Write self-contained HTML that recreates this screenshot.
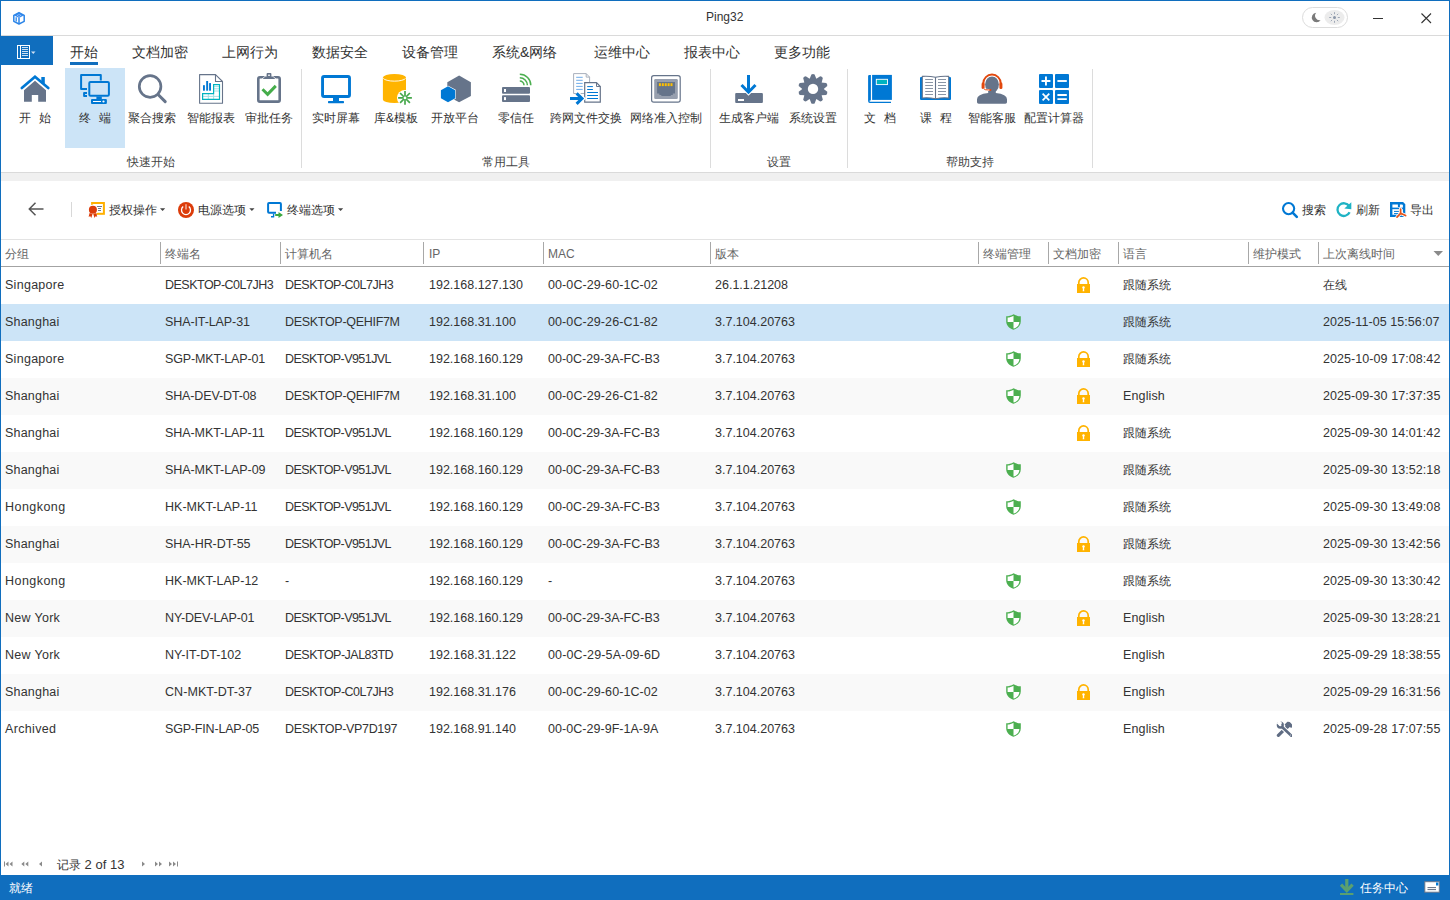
<!DOCTYPE html>
<html><head><meta charset="utf-8">
<style>
*{margin:0;padding:0;box-sizing:border-box}
html,body{width:1450px;height:900px;overflow:hidden;background:#fff}
body{position:relative;font-family:"Liberation Sans",sans-serif;color:#333;font-size:12px}
.a{position:absolute;white-space:nowrap}
.bl{background:#106ebe}
.sep{position:absolute;background:#dcdcdc;width:1px}
.tab{position:absolute;top:43px;font-size:14px;line-height:18px;color:#333}
.rb{position:absolute;top:108px;font-size:12px;line-height:20px;color:#333;text-align:center;width:80px}
.gl{position:absolute;top:152px;font-size:12px;line-height:20px;color:#444;text-align:center;width:100px}
.ic{position:absolute}
.tb{position:absolute;top:200px;font-size:12px;line-height:20px;color:#333}
.hd{position:absolute;top:244px;font-size:12px;line-height:20px;color:#666}
.hs{position:absolute;top:242px;height:22px;width:1px;background:#a8a8a8}
.row{position:absolute;left:1px;width:1448px;height:37px}
.row div{position:absolute;top:8px;line-height:20px;font-size:12.5px;color:#333;white-space:nowrap}
.row svg{position:absolute;top:10px}
.alt{background:#f9f9f9}
.selr{background:#cce4f7}
</style></head><body>
<!-- window border -->
<div class="a bl" style="left:0;top:0;width:1450px;height:1px"></div>
<div class="a bl" style="left:0;top:0;width:1px;height:900px"></div>
<div class="a bl" style="left:1449px;top:0;width:1px;height:900px"></div>

<!-- title bar -->
<div class="a" style="left:706px;top:9px;font-size:12px;line-height:16px;color:#333">Ping32</div>
<div class="a" style="left:1px;top:35px;width:1448px;height:1px;background:#dadada"></div>

<!-- tab bar -->
<div class="a bl" style="left:1px;top:36px;width:52px;height:29px"></div>
<div class="tab" style="left:70px">开始</div>
<div class="a bl" style="left:70px;top:62px;width:28px;height:3px"></div>
<div class="tab" style="left:132px">文档加密</div>
<div class="tab" style="left:222px">上网行为</div>
<div class="tab" style="left:312px">数据安全</div>
<div class="tab" style="left:402px">设备管理</div>
<div class="tab" style="left:492px">系统&amp;网络</div>
<div class="tab" style="left:594px">运维中心</div>
<div class="tab" style="left:684px">报表中心</div>
<div class="tab" style="left:774px">更多功能</div>

<!-- ribbon -->
<div class="a" style="left:65px;top:68px;width:60px;height:80px;background:#cce4f7"></div>
<div class="rb" style="left:-5px">开<span style="display:inline-block;width:8px"></span>始</div>
<div class="rb" style="left:55px">终<span style="display:inline-block;width:8px"></span>端</div>
<div class="rb" style="left:112px">聚合搜索</div>
<div class="rb" style="left:171px">智能报表</div>
<div class="rb" style="left:229px">审批任务</div>
<div class="rb" style="left:296px">实时屏幕</div>
<div class="rb" style="left:356px">库&amp;模板</div>
<div class="rb" style="left:415px">开放平台</div>
<div class="rb" style="left:476px">零信任</div>
<div class="rb" style="left:546px">跨网文件交换</div>
<div class="rb" style="left:626px">网络准入控制</div>
<div class="rb" style="left:709px">生成客户端</div>
<div class="rb" style="left:773px">系统设置</div>
<div class="rb" style="left:840px">文<span style="display:inline-block;width:8px"></span>档</div>
<div class="rb" style="left:896px">课<span style="display:inline-block;width:8px"></span>程</div>
<div class="rb" style="left:952px">智能客服</div>
<div class="rb" style="left:1014px">配置计算器</div>
<div class="sep" style="left:301px;top:69px;height:99px"></div>
<div class="sep" style="left:710px;top:69px;height:99px"></div>
<div class="sep" style="left:847px;top:69px;height:99px"></div>
<div class="sep" style="left:1092px;top:69px;height:99px"></div>
<div class="gl" style="left:101px">快速开始</div>
<div class="gl" style="left:456px">常用工具</div>
<div class="gl" style="left:729px">设置</div>
<div class="gl" style="left:920px">帮助支持</div>
<div class="a" style="left:1px;top:172px;width:1448px;height:1px;background:#dadada"></div>
<div class="a" style="left:1px;top:173px;width:1448px;height:8px;background:#f0f0f0"></div>

<!-- toolbar -->
<div class="a" style="left:71px;top:202px;width:1px;height:15px;background:#d8d8d8"></div>
<div class="tb" style="left:109px">授权操作</div>
<div class="tb" style="left:198px">电源选项</div>
<div class="tb" style="left:287px">终端选项</div>
<div class="tb" style="left:1302px">搜索</div>
<div class="tb" style="left:1356px">刷新</div>
<div class="tb" style="left:1410px">导出</div>

<!-- header -->
<div class="a" style="left:1px;top:239px;width:1448px;height:1px;background:#e3e3e3"></div>
<div class="a" style="left:1px;top:266px;width:1448px;height:1px;background:#a3a3a3"></div>
<div class="hd" style="left:5px">分组</div>
<div class="hs" style="left:160px"></div><div class="hd" style="left:165px">终端名</div>
<div class="hs" style="left:280px"></div><div class="hd" style="left:285px">计算机名</div>
<div class="hs" style="left:423px"></div><div class="hd" style="left:429px">IP</div>
<div class="hs" style="left:543px"></div><div class="hd" style="left:548px">MAC</div>
<div class="hs" style="left:710px"></div><div class="hd" style="left:715px">版本</div>
<div class="hs" style="left:978px"></div><div class="hd" style="left:983px">终端管理</div>
<div class="hs" style="left:1048px"></div><div class="hd" style="left:1053px">文档加密</div>
<div class="hs" style="left:1118px"></div><div class="hd" style="left:1123px">语言</div>
<div class="hs" style="left:1248px"></div><div class="hd" style="left:1253px">维护模式</div>
<div class="hs" style="left:1318px"></div><div class="hd" style="left:1323px">上次离线时间</div>

<!-- ROWS -->
<div class="row" style="top:267px"><div style="left:4px;letter-spacing:0.28px">Singapore</div><div style="left:164px;letter-spacing:-0.51px">DESKTOP-C0L7JH3</div><div style="left:284px;letter-spacing:-0.51px">DESKTOP-C0L7JH3</div><div style="left:428px;letter-spacing:0.00px">192.168.127.130</div><div style="left:547px;letter-spacing:0.09px">00-0C-29-60-1C-02</div><div style="left:714px;letter-spacing:0.00px">26.1.1.21208</div><svg class="lck" width="13" height="16" style="left:1076px" viewBox="0 0 13 16"><use href="#lock"/></svg><div style="left:1122px;font-size:12px">跟随系统</div><div style="left:1322px;font-size:12px">在线</div></div>
<div class="row selr" style="top:304px"><div style="left:4px;letter-spacing:0.20px">Shanghai</div><div style="left:164px;letter-spacing:-0.10px">SHA-IT-LAP-31</div><div style="left:284px;letter-spacing:-0.30px">DESKTOP-QEHIF7M</div><div style="left:428px;letter-spacing:0.00px">192.168.31.100</div><div style="left:547px;letter-spacing:0.09px">00-0C-29-26-C1-82</div><div style="left:714px;letter-spacing:0.00px">3.7.104.20763</div><svg class="shd" width="15" height="16" style="left:1005px" viewBox="0 0 15 16"><use href="#shield"/></svg><div style="left:1122px;font-size:12px">跟随系统</div><div style="left:1322px;letter-spacing:0.07px">2025-11-05 15:56:07</div></div>
<div class="row" style="top:341px"><div style="left:4px;letter-spacing:0.28px">Singapore</div><div style="left:164px;letter-spacing:-0.15px">SGP-MKT-LAP-01</div><div style="left:284px;letter-spacing:-0.56px">DESKTOP-V951JVL</div><div style="left:428px;letter-spacing:0.00px">192.168.160.129</div><div style="left:547px;letter-spacing:-0.01px">00-0C-29-3A-FC-B3</div><div style="left:714px;letter-spacing:0.00px">3.7.104.20763</div><svg class="shd" width="15" height="16" style="left:1005px" viewBox="0 0 15 16"><use href="#shield"/></svg><svg class="lck" width="13" height="16" style="left:1076px" viewBox="0 0 13 16"><use href="#lock"/></svg><div style="left:1122px;font-size:12px">跟随系统</div><div style="left:1322px;letter-spacing:0.07px">2025-10-09 17:08:42</div></div>
<div class="row alt" style="top:378px"><div style="left:4px;letter-spacing:0.20px">Shanghai</div><div style="left:164px;letter-spacing:-0.13px">SHA-DEV-DT-08</div><div style="left:284px;letter-spacing:-0.30px">DESKTOP-QEHIF7M</div><div style="left:428px;letter-spacing:0.00px">192.168.31.100</div><div style="left:547px;letter-spacing:0.09px">00-0C-29-26-C1-82</div><div style="left:714px;letter-spacing:0.00px">3.7.104.20763</div><svg class="shd" width="15" height="16" style="left:1005px" viewBox="0 0 15 16"><use href="#shield"/></svg><svg class="lck" width="13" height="16" style="left:1076px" viewBox="0 0 13 16"><use href="#lock"/></svg><div style="left:1122px;letter-spacing:0.13px">English</div><div style="left:1322px;letter-spacing:0.07px">2025-09-30 17:37:35</div></div>
<div class="row" style="top:415px"><div style="left:4px;letter-spacing:0.20px">Shanghai</div><div style="left:164px;letter-spacing:-0.07px">SHA-MKT-LAP-11</div><div style="left:284px;letter-spacing:-0.56px">DESKTOP-V951JVL</div><div style="left:428px;letter-spacing:0.00px">192.168.160.129</div><div style="left:547px;letter-spacing:-0.01px">00-0C-29-3A-FC-B3</div><div style="left:714px;letter-spacing:0.00px">3.7.104.20763</div><svg class="lck" width="13" height="16" style="left:1076px" viewBox="0 0 13 16"><use href="#lock"/></svg><div style="left:1122px;font-size:12px">跟随系统</div><div style="left:1322px;letter-spacing:0.07px">2025-09-30 14:01:42</div></div>
<div class="row alt" style="top:452px"><div style="left:4px;letter-spacing:0.20px">Shanghai</div><div style="left:164px;letter-spacing:-0.07px">SHA-MKT-LAP-09</div><div style="left:284px;letter-spacing:-0.56px">DESKTOP-V951JVL</div><div style="left:428px;letter-spacing:0.00px">192.168.160.129</div><div style="left:547px;letter-spacing:-0.01px">00-0C-29-3A-FC-B3</div><div style="left:714px;letter-spacing:0.00px">3.7.104.20763</div><svg class="shd" width="15" height="16" style="left:1005px" viewBox="0 0 15 16"><use href="#shield"/></svg><div style="left:1122px;font-size:12px">跟随系统</div><div style="left:1322px;letter-spacing:0.07px">2025-09-30 13:52:18</div></div>
<div class="row" style="top:489px"><div style="left:4px;letter-spacing:0.46px">Hongkong</div><div style="left:164px;letter-spacing:0.02px">HK-MKT-LAP-11</div><div style="left:284px;letter-spacing:-0.56px">DESKTOP-V951JVL</div><div style="left:428px;letter-spacing:0.00px">192.168.160.129</div><div style="left:547px;letter-spacing:-0.01px">00-0C-29-3A-FC-B3</div><div style="left:714px;letter-spacing:0.00px">3.7.104.20763</div><svg class="shd" width="15" height="16" style="left:1005px" viewBox="0 0 15 16"><use href="#shield"/></svg><div style="left:1122px;font-size:12px">跟随系统</div><div style="left:1322px;letter-spacing:0.07px">2025-09-30 13:49:08</div></div>
<div class="row alt" style="top:526px"><div style="left:4px;letter-spacing:0.20px">Shanghai</div><div style="left:164px;letter-spacing:-0.05px">SHA-HR-DT-55</div><div style="left:284px;letter-spacing:-0.56px">DESKTOP-V951JVL</div><div style="left:428px;letter-spacing:0.00px">192.168.160.129</div><div style="left:547px;letter-spacing:-0.01px">00-0C-29-3A-FC-B3</div><div style="left:714px;letter-spacing:0.00px">3.7.104.20763</div><svg class="lck" width="13" height="16" style="left:1076px" viewBox="0 0 13 16"><use href="#lock"/></svg><div style="left:1122px;font-size:12px">跟随系统</div><div style="left:1322px;letter-spacing:0.07px">2025-09-30 13:42:56</div></div>
<div class="row" style="top:563px"><div style="left:4px;letter-spacing:0.46px">Hongkong</div><div style="left:164px;letter-spacing:0.02px">HK-MKT-LAP-12</div><div style="left:284px">-</div><div style="left:428px;letter-spacing:0.00px">192.168.160.129</div><div style="left:547px">-</div><div style="left:714px;letter-spacing:0.00px">3.7.104.20763</div><svg class="shd" width="15" height="16" style="left:1005px" viewBox="0 0 15 16"><use href="#shield"/></svg><div style="left:1122px;font-size:12px">跟随系统</div><div style="left:1322px;letter-spacing:0.07px">2025-09-30 13:30:42</div></div>
<div class="row alt" style="top:600px"><div style="left:4px;letter-spacing:0.29px">New York</div><div style="left:164px;letter-spacing:-0.15px">NY-DEV-LAP-01</div><div style="left:284px;letter-spacing:-0.56px">DESKTOP-V951JVL</div><div style="left:428px;letter-spacing:0.00px">192.168.160.129</div><div style="left:547px;letter-spacing:-0.01px">00-0C-29-3A-FC-B3</div><div style="left:714px;letter-spacing:0.00px">3.7.104.20763</div><svg class="shd" width="15" height="16" style="left:1005px" viewBox="0 0 15 16"><use href="#shield"/></svg><svg class="lck" width="13" height="16" style="left:1076px" viewBox="0 0 13 16"><use href="#lock"/></svg><div style="left:1122px;letter-spacing:0.13px">English</div><div style="left:1322px;letter-spacing:0.07px">2025-09-30 13:28:21</div></div>
<div class="row" style="top:637px"><div style="left:4px;letter-spacing:0.29px">New York</div><div style="left:164px;letter-spacing:0.03px">NY-IT-DT-102</div><div style="left:284px;letter-spacing:-0.51px">DESKTOP-JAL83TD</div><div style="left:428px;letter-spacing:0.00px">192.168.31.122</div><div style="left:547px;letter-spacing:0.14px">00-0C-29-5A-09-6D</div><div style="left:714px;letter-spacing:0.00px">3.7.104.20763</div><div style="left:1122px;letter-spacing:0.13px">English</div><div style="left:1322px;letter-spacing:0.07px">2025-09-29 18:38:55</div></div>
<div class="row alt" style="top:674px"><div style="left:4px;letter-spacing:0.20px">Shanghai</div><div style="left:164px;letter-spacing:0.08px">CN-MKT-DT-37</div><div style="left:284px;letter-spacing:-0.51px">DESKTOP-C0L7JH3</div><div style="left:428px;letter-spacing:0.00px">192.168.31.176</div><div style="left:547px;letter-spacing:0.09px">00-0C-29-60-1C-02</div><div style="left:714px;letter-spacing:0.00px">3.7.104.20763</div><svg class="shd" width="15" height="16" style="left:1005px" viewBox="0 0 15 16"><use href="#shield"/></svg><svg class="lck" width="13" height="16" style="left:1076px" viewBox="0 0 13 16"><use href="#lock"/></svg><div style="left:1122px;letter-spacing:0.13px">English</div><div style="left:1322px;letter-spacing:0.07px">2025-09-29 16:31:56</div></div>
<div class="row" style="top:711px"><div style="left:4px;letter-spacing:0.34px">Archived</div><div style="left:164px;letter-spacing:-0.18px">SGP-FIN-LAP-05</div><div style="left:284px;letter-spacing:-0.33px">DESKTOP-VP7D197</div><div style="left:428px;letter-spacing:0.00px">192.168.91.140</div><div style="left:547px;letter-spacing:0.04px">00-0C-29-9F-1A-9A</div><div style="left:714px;letter-spacing:0.00px">3.7.104.20763</div><svg class="shd" width="15" height="16" style="left:1005px" viewBox="0 0 15 16"><use href="#shield"/></svg><div style="left:1122px;letter-spacing:0.13px">English</div><svg class="tls" width="16" height="16" style="left:1275px" viewBox="0 0 16 16"><use href="#tools"/></svg><div style="left:1322px;letter-spacing:0.07px">2025-09-28 17:07:55</div></div>
<!-- /ROWS -->

<!-- pager -->
<div class="a" style="left:57px;top:856px;font-size:13px;line-height:18px;color:#333"><span style="font-size:12px">记录</span> 2 of 13</div>

<!-- status bar -->
<div class="a bl" style="left:0;top:875px;width:1450px;height:25px"></div>
<div class="a" style="left:9px;top:879px;font-size:12px;line-height:18px;color:#fff">就绪</div>
<div class="a" style="left:1360px;top:879px;font-size:12px;line-height:18px;color:#fff">任务中心</div>
<!-- ICONS -->
<svg class="a" style="left:0;top:0" width="1450" height="900" viewBox="0 0 1450 900">
<defs>
<g id="shield">
 <path d="M7.5,0.2 C5.3,1.6 2.6,2.3 0.2,2.3 V7.2 C0.2,11.6 3.6,14.5 7.5,15.8 C11.4,14.5 14.8,11.6 14.8,7.2 V2.3 C12.4,2.3 9.7,1.6 7.5,0.2 Z" fill="#4caf50"/>
 <path d="M7.5,1.8 C5.7,2.9 3.6,3.5 1.6,3.6 V8 H7.5 Z" fill="#fff"/>
 <path d="M7.5,8 H13.4 C13.2,11.3 10.8,13.5 7.5,14.6 Z" fill="#fff"/>
</g>
<g id="lock">
 <path d="M1.8,7.5 V5.6 A4.7,4.7 0 0 1 11.2,5.6 V7.5" fill="none" stroke="#ffb300" stroke-width="1.7"/>
 <rect x="0" y="7" width="13" height="9" fill="#ffb300"/>
 <circle cx="6.5" cy="10.5" r="1.2" fill="#fff"/>
 <path d="M6,10.5 H7 L7.3,14.3 H5.7 Z" fill="#fff"/>
</g>
<g id="tools">
 <path d="M2.4,14.4 L11.5,5.3" stroke="#5f6c83" stroke-width="3.2" stroke-linecap="round"/>
 <path d="M8.6,3.4 L11.4,0.7 Q13.6,0.4 14.8,2 L17,4.8 L15.3,6.9 L13.8,5.9 L11.6,8.1 Z" fill="#5f6c83"/>
 <g stroke="#fff" stroke-width="1.6" fill="#fff">
  <path d="M5,5 L15.2,14.6" stroke-width="4.6" stroke-linecap="round"/>
 </g>
 <circle cx="4.3" cy="4.1" r="3.6" fill="#5f6c83"/>
 <path d="M5,5 L15.2,14.6" stroke="#5f6c83" stroke-width="2.8" stroke-linecap="round"/>
 <path d="M1.2,0 L4.4,3.9 L6.2,2.1 L3.2,-1" fill="#fff"/>
 <circle cx="4.3" cy="4.1" r="1.2" fill="#fff"/>
 <path d="M4.3,4.1 L1.5,1.3" stroke="#fff" stroke-width="2.4"/>
 <circle cx="14.6" cy="14" r="0.55" fill="#dfe3ea"/>
</g>
</defs>

<!-- title bar app icon -->
<path d="M19,12.6 L24.2,15.3 L19,18 L13.8,15.3 Z" fill="#3b8cf0"/>
<g fill="#bcd8fb"><circle cx="17.6" cy="15.3" r="0.55"/><circle cx="20.4" cy="15.3" r="0.55"/><circle cx="19" cy="14.2" r="0.5"/><circle cx="19" cy="16.4" r="0.5"/></g>
<g fill="none" stroke="#2d86e8" stroke-width="1.5" stroke-linejoin="round">
 <path d="M19,12.6 L24.2,15.3 V21.3 L19,24 L13.8,21.3 V15.3 Z"/>
 <path d="M19,18 V24"/>
 <path d="M16.2,17.2 V21.6" stroke-width="1.3"/>
</g>
<!-- theme toggle -->
<rect x="1302.5" y="7.5" width="45" height="20" rx="10" fill="#fff" stroke="#dcdcdc" stroke-width="1"/>
<ellipse cx="1334.5" cy="17.5" rx="10" ry="7.5" fill="#ececec"/>
<path d="M1316.2,12.7 A4.8,4.8 0 1 0 1320.6,20.2 A4.6,4.6 0 0 1 1316.2,12.7 Z" fill="#7a7a7a"/>
<g stroke="#8a96a8" stroke-width="0.8">
 <path d="M1334.5,12.2 V14.2 M1334.5,20.8 V22.8 M1329.2,17.5 H1331.2 M1337.8,17.5 H1339.8 M1330.8,13.8 L1332.1,15.1 M1336.9,19.9 L1338.2,21.2 M1338.2,13.8 L1336.9,15.1 M1332.1,19.9 L1330.8,21.2"/>
</g>
<circle cx="1334.5" cy="17.5" r="1.5" fill="#8a96a8"/>
<!-- min / close -->
<rect x="1373" y="18" width="10" height="1" fill="#333"/>
<path d="M1421.5,13.5 L1431,23 M1431,13.5 L1421.5,23" stroke="#333" stroke-width="1.1"/>

<!-- file button icon -->
<g fill="none" stroke="#fff">
 <rect x="17.5" y="45.5" width="12" height="13" stroke-width="1"/>
 <path d="M20.5,45.5 V58.5" stroke-width="1"/>
 <path d="M22,47.5 H28 M22,49.5 H28 M22,51.5 H28 M22,53.5 H28 M22,55.5 H28" stroke-width="0.8"/>
</g>
<path d="M31,51.5 L35.5,51.5 L33.25,54 Z" fill="#cfe0f3"/>

<!-- RIBBON ICONS -->
<!-- home -->
<path d="M21.8,88 L35,76.8 L48.3,88" fill="none" stroke="#0078d4" stroke-width="2.7" stroke-linecap="round" stroke-linejoin="miter"/>
<rect x="41.3" y="77" width="3.5" height="6.5" fill="#0078d4"/>
<path d="M35,80.8 L24,90.3 V101.8 H31.8 V94.9 H38.2 V101.8 H46 V90.3 Z" fill="#66748a"/>
<!-- terminal -->
<g fill="none" stroke="#0078d4" stroke-width="2" stroke-linejoin="round">
 <path d="M87,89 H81.1 V75 H100.8 V80.5"/>
 <path d="M87,93 H84.1 V95.9 H87" stroke-width="2"/>
 <rect x="89.3" y="81.9" width="19.6" height="13.8" rx="1.2"/>
</g>
<rect x="96.4" y="96.5" width="5.4" height="2.8" fill="#0078d4"/>
<rect x="91" y="99" width="15.9" height="4.9" rx="1" fill="#0078d4"/>
<rect x="93" y="101" width="8" height="1" fill="#fff"/>
<circle cx="103.5" cy="101.5" r="1.1" fill="#fff"/>
<!-- search -->
<circle cx="150.1" cy="86.5" r="10.8" fill="none" stroke="#66748a" stroke-width="2.7"/>
<path d="M158.3,94.7 L165.2,101.6" stroke="#66748a" stroke-width="3" stroke-linecap="round"/>
<!-- report -->
<path d="M199.6,74.6 H215.5 L222.5,81.5 V103.3 H199.6 Z" fill="#fff" stroke="#66748a" stroke-width="1.1" stroke-linejoin="round"/>
<path d="M215.5,74.6 V81.5 H222.5" fill="none" stroke="#66748a" stroke-width="1.1"/>
<rect x="203" y="85.2" width="1.9" height="5.5" fill="#0078d4"/>
<rect x="206.2" y="81" width="1.9" height="9.7" fill="#0078d4"/>
<rect x="209.1" y="83.1" width="1.9" height="7.6" fill="#0078d4"/>
<path d="M208.3,93.6 V99.3 M213.6,93.6 V99.3 M202.5,96.4 H219.5 M213.6,86.6 H219.5 M213.6,88.8 H219.5 M213.6,91 H219.5" stroke="#9edde3" stroke-width="0.9" fill="none"/>
<path d="M202.6,93.6 H213.6 V84.6 H219.5 V99.4 H202.6 Z" fill="none" stroke="#00b3c0" stroke-width="1.2"/>
<!-- clipboard -->
<rect x="258.3" y="77.3" width="21.4" height="24.3" rx="1.6" fill="#fff" stroke="#66748a" stroke-width="2.6"/>
<path d="M262.6,79 L265.3,76.6 H266.6 V74 Q266.6,73.1 267.5,73.1 H270.5 Q271.4,73.1 271.4,74 V76.6 H272.7 L275.4,79 Z" fill="#66748a" stroke="#fff" stroke-width="1.3" paint-order="stroke"/>
<rect x="268.1" y="74.6" width="1.8" height="1.3" fill="#fff"/>
<path d="M262.5,89.3 L267.6,94.3 L275.8,85.9" fill="none" stroke="#45ad4a" stroke-width="3"/>
<!-- monitor -->
<rect x="322.55" y="76.45" width="26.95" height="20" rx="1.5" fill="none" stroke="#0078d4" stroke-width="2.9"/>
<rect x="333" y="97.5" width="6" height="3.7" fill="#0078d4"/>
<rect x="328" y="101" width="16" height="2.2" rx="0.6" fill="#0078d4"/>
<!-- db -->
<path d="M382.9,77.5 V99.5 A11.55,3.6 0 0 0 406,99.5 V77.5 Z" fill="#ffb400"/>
<ellipse cx="394.45" cy="77.5" rx="11.55" ry="3.5" fill="#ffb400"/>
<path d="M383.3,78.3 A11.3,3.4 0 0 0 405.6,78.3" fill="none" stroke="#fff" stroke-width="0.9"/>
<circle cx="405" cy="97.9" r="8" fill="#fff"/>
<g stroke="#47a84c" stroke-width="1.7">
 <path d="M398.1,97.9 H411.9 M405,91 V104.8 M400.1,93 L409.9,102.8 M409.9,93 L400.1,102.8"/>
</g>
<circle cx="405" cy="97.9" r="1.4" fill="#fff"/>
<!-- hex -->
<path d="M459.1,75.4 L470.9,82.2 V95.9 L459.1,102.3 L447.3,95.9 V82.2 Z" fill="#66748a"/>
<path d="M448,86.3 L455.2,90.2 V98.3 L448,102.2 L440.9,98.3 V90.2 Z" fill="#0078d4" stroke="#fff" stroke-width="1.1" paint-order="stroke"/>
<!-- zero trust -->
<rect x="502" y="87.1" width="28" height="6.7" rx="1" fill="#66748a"/>
<rect x="502" y="95.2" width="28" height="6.7" rx="1" fill="#66748a"/>
<rect x="504" y="89" width="2" height="3" fill="#fff"/>
<rect x="504" y="97.1" width="2" height="3" fill="#fff"/>
<g fill="none" stroke="#4caf50" stroke-width="1.5">
 <path d="M519.8,81.1 A4.2,4.2 0 0 1 524,85.3"/>
 <path d="M519.8,77.7 A7.6,7.6 0 0 1 527.4,85.3"/>
 <path d="M519.8,74.3 A11,11 0 0 1 530.8,85.3"/>
</g>
<!-- file exchange -->
<path d="M573.6,73.6 H586.2 L589.6,77.1 V93.5 H573.6 Z" fill="#fff" stroke="#a9b0bc" stroke-width="1"/>
<path d="M586.2,73.6 V77.1 H589.6" fill="none" stroke="#a9b0bc" stroke-width="1"/>
<path d="M576.2,77.3 H582.7 M576.2,80.3 H582.7 M576.2,83.4 H582.7 M576.2,86.4 H582.7 M576.2,89.4 H582.7" stroke="#5ea3e6" stroke-width="0.9"/>
<path d="M584.7,82.7 H596.5 L600.3,86.5 V102.1 H584.7 Z" fill="#fff" stroke="#66748a" stroke-width="1.2"/>
<path d="M596.5,82.7 V86.5 H600.3" fill="none" stroke="#66748a" stroke-width="1"/>
<path d="M587.2,86.6 H592.9 M587.2,89.5 H592.9 M587.2,92.5 H598 M587.2,95.5 H598 M587.2,98.5 H598" stroke="#0078d4" stroke-width="1"/>
<path d="M570,98.6 H581.5 M576.6,93.4 L582,98.6 L576.6,103.8" fill="none" stroke="#fff" stroke-width="5.5"/>
<path d="M570,98.6 H581.5 M576.6,93.4 L582,98.6 L576.6,103.8" fill="none" stroke="#0078d4" stroke-width="3"/>
<!-- network -->
<rect x="651.6" y="75.6" width="28.6" height="26.6" rx="2.2" fill="#fff" stroke="#66748a" stroke-width="1.2"/>
<rect x="654.2" y="79" width="23.6" height="19.9" rx="1.2" fill="#979fae"/>
<path d="M657.1,82 H675 V93.6 H672.8 V95 H670.8 V96.1 H661.3 V95 H659.3 V93.6 H657.1 Z" fill="#66748a"/>
<g fill="#ffc000"><rect x="658.9" y="83.2" width="2" height="2.9"/><rect x="661.8" y="83.2" width="2" height="2.9"/><rect x="664.7" y="83.2" width="2" height="2.9"/><rect x="667.6" y="83.2" width="2" height="2.9"/><rect x="670.5" y="83.2" width="2" height="2.9"/></g>
<!-- download -->
<rect x="735.2" y="93" width="27.7" height="9.9" rx="1" fill="#66748a"/>
<rect x="738" y="99" width="6" height="2" fill="#fff"/>
<path d="M748.5,75 V91 M741.5,85 L748.5,92.2 L755.5,85" fill="none" stroke="#fff" stroke-width="5"/>
<path d="M748.5,75 V91 M741.5,85 L748.5,92.2 L755.5,85" fill="none" stroke="#0078d4" stroke-width="3"/>
<!-- gear -->
<g fill="#66748a">
 <circle cx="813" cy="88.9" r="10.6"/>
 <g transform="translate(813,88.9)">
  <path id="tooth" d="M-3.6,-9.4 L-1.6,-14.5 Q0,-15.3 1.6,-14.5 L3.6,-9.4 Z"/>
  <use href="#tooth" transform="rotate(36)"/><use href="#tooth" transform="rotate(72)"/><use href="#tooth" transform="rotate(108)"/><use href="#tooth" transform="rotate(144)"/><use href="#tooth" transform="rotate(180)"/><use href="#tooth" transform="rotate(216)"/><use href="#tooth" transform="rotate(252)"/><use href="#tooth" transform="rotate(288)"/><use href="#tooth" transform="rotate(324)"/>
 </g>
</g>
<circle cx="813" cy="88.9" r="5.2" fill="#fff"/>
<!-- book -->
<path d="M868.1,76.2 Q868.1,74.9 869.3,74.9 H870.9 V100.3 Q869.4,100.4 869.4,101.1 Q869.4,101.7 870.4,101.7 H891 V102.9 H869.9 Q868.1,102.9 868.1,101 Z" fill="#0078d4"/>
<rect x="872.1" y="74.9" width="19.8" height="25" fill="#0078d4"/>
<rect x="876.3" y="79.3" width="11.2" height="5.3" fill="#00b3c0" stroke="#fff" stroke-width="0.9"/>
<!-- open book -->
<rect x="920" y="77" width="31" height="22.9" rx="1" fill="#0078d4"/>
<path d="M922.3,76.4 Q929,75.9 935.5,77.3 Q942,75.9 948.7,76.4 V98 Q942,97.4 935.5,98.7 Q929,97.4 922.3,98 Z" fill="#fff" stroke="#66748a" stroke-width="1.1"/>
<path d="M935.5,77.3 V98.7" stroke="#66748a" stroke-width="1.1"/>
<path d="M925.2,79.5 H933 M925.2,82.5 H933 M925.2,85.5 H933 M925.2,88.5 H933 M925.2,91.5 H933 M925.2,94.5 H933 M938,79.5 H946 M938,82.5 H946 M938,85.5 H946 M938,88.5 H946 M938,91.5 H946 M938,94.5 H946" stroke="#7d899b" stroke-width="0.9"/>
<!-- headset -->
<ellipse cx="992" cy="84.5" rx="6.9" ry="8" fill="#66748a"/>
<path d="M988.2,90 H995.8 V93 Q1007,94.2 1007,99.2 V102.3 Q1007,103.7 1005.3,103.7 H978.7 Q977,103.7 977,102.3 V99.2 Q977,94.2 988.2,93 Z" fill="#66748a"/>
<path d="M983.3,85.5 V83.2 A8.7,8.7 0 0 1 1000.7,83.2 V85.5" fill="none" stroke="#fff" stroke-width="3"/>
<path d="M983.3,85.5 V83.2 A8.7,8.7 0 0 1 1000.7,83.2 V85.5" fill="none" stroke="#e2480e" stroke-width="1.9"/>
<rect x="981.6" y="82.6" width="3" height="6.4" rx="1.3" fill="#e2480e"/>
<rect x="999.4" y="82.6" width="3" height="6.4" rx="1.3" fill="#e2480e"/>
<path d="M983.4,88.5 Q984.5,90.2 989.6,90" fill="none" stroke="#fff" stroke-width="2.2"/>
<path d="M983.4,88.5 Q984.5,90.2 989.6,90" fill="none" stroke="#e2480e" stroke-width="1"/>
<circle cx="990.3" cy="90" r="1.1" fill="#e2480e"/>
<!-- calculator -->
<g fill="#0078d4">
 <rect x="1039" y="74" width="14" height="14" rx="1"/>
 <rect x="1055" y="74" width="14" height="14" rx="1"/>
 <rect x="1039" y="90" width="14" height="14" rx="1"/>
 <rect x="1055" y="90" width="14" height="14" rx="1"/>
</g>
<g stroke="#fff" stroke-width="1.9" fill="none">
 <path d="M1041.5,81 H1050.4 M1045.95,76.6 V85.5"/>
 <path d="M1057.4,81 H1066.8"/>
 <path d="M1042.6,93.6 L1049.3,100.4 M1049.3,93.6 L1042.6,100.4" stroke-width="1.7"/>
 <path d="M1057.4,95 H1066.8 M1057.4,99.1 H1066.8"/>
</g>

<!-- TOOLBAR ICONS -->
<path d="M43.5,209 H29.3 M35.5,202.8 L29.3,209 L35.5,215.2" fill="none" stroke="#555" stroke-width="1.5"/>
<!-- cert -->
<rect x="92.1" y="203" width="11.8" height="10.8" fill="none" stroke="#ffb000" stroke-width="2"/>
<path d="M96.3,206.5 H102 M98,208.5 H101 M98,210.5 H101" stroke="#5d6a80" stroke-width="0.9"/>
<circle cx="92.9" cy="209.7" r="5.3" fill="#fff"/>
<path d="M89.6,213 L88.6,216.8 L90.3,216.3 L91.3,217.9 L92.5,214 Z M96.2,213 L97.2,216.8 L95.5,216.3 L94.5,217.9 L93.3,214 Z" fill="#dc3c0a"/>
<circle cx="92.9" cy="209.7" r="4" fill="#dc3c0a"/>
<path d="M160,208.2 H165.2 L162.6,211 Z" fill="#444"/>
<!-- power -->
<circle cx="186" cy="210" r="8" fill="#dc3c0a"/>
<path d="M183.2,206.6 A4.5,4.5 0 1 0 188.8,206.6" fill="none" stroke="#fff" stroke-width="1.3"/>
<path d="M186,204.3 V209.6" stroke="#f8d0c4" stroke-width="1.2"/>
<path d="M249.3,208.2 H254.5 L251.9,211 Z" fill="#444"/>
<!-- terminal options -->
<path d="M276,212.7 H269 Q268.1,212.7 268.1,211.8 V203.9 Q268.1,203 269,203 H280 Q280.9,203 280.9,203.9 V211" fill="none" stroke="#0078d4" stroke-width="2"/>
<path d="M273.6,213.7 V216.8 M271,216.8 H274.2" stroke="#0078d4" stroke-width="1.4" fill="none"/>
<path d="M275.2,213.9 H278.5 V211.9 L283,214.9 L278.5,217.9 V215.9 H275.2 Z" fill="#3aa83f"/>
<path d="M338,208.2 H343.2 L340.6,211 Z" fill="#444"/>
<!-- search blue -->
<circle cx="1288.6" cy="208.6" r="5.6" fill="none" stroke="#0078d4" stroke-width="2.1"/>
<path d="M1292.6,212.6 L1296.8,216.8" stroke="#0078d4" stroke-width="2.6" stroke-linecap="round"/>
<!-- refresh -->
<path d="M1349.2,206.2 A6.35,6.35 0 1 0 1349.6,212.3" fill="none" stroke="#1fb3c4" stroke-width="2.3"/>
<path d="M1344.3,208.6 L1351.3,202.2 V209.2 Z" fill="#1fb3c4"/>
<!-- export -->
<path d="M1391.2,203.2 H1402.6 L1404.1,204.7 V215.9 H1391.2 Z" fill="#fff" stroke="#0078d4" stroke-width="2.4"/>
<rect x="1397.9" y="203.6" width="2" height="3.4" fill="#0078d4"/>
<path d="M1392,208.4 H1403.6" stroke="#0078d4" stroke-width="1.6"/>
<path d="M1394,211.4 H1399.5 M1394,213.6 H1399" stroke="#0078d4" stroke-width="1"/>
<path d="M1400.6,209 L1400.6,213.3 L1397,217.2 M1400.6,213.3 L1405.6,215.6" fill="none" stroke="#fff" stroke-width="3.4" stroke-linecap="round"/>
<path d="M1400.6,209 L1400.6,213.3 L1397,217.2 M1400.6,213.3 L1405.6,215.6" fill="none" stroke="#e4531a" stroke-width="1.7" stroke-linecap="round"/>

<!-- header dropdown -->
<path d="M1433.5,251 H1443 L1438.25,256 Z" fill="#8a8a8a"/>

<!-- pager -->
<g fill="#8a8a8a">
 <rect x="4" y="861.5" width="1" height="5"/><path d="M8.5,861.5 V866.5 L5.5,864 Z M12.5,861.5 V866.5 L9.5,864 Z"/>
 <path d="M24.3,861.5 V866.5 L21.3,864 Z M28.3,861.5 V866.5 L25.3,864 Z"/>
 <path d="M42,861.5 V866.5 L39,864 Z"/>
 <path d="M142,861.5 V866.5 L145,864 Z"/>
 <path d="M155,861.5 V866.5 L158,864 Z M159,861.5 V866.5 L162,864 Z"/>
 <path d="M169,861.5 V866.5 L172,864 Z M173,861.5 V866.5 L176,864 Z"/><rect x="177" y="861.5" width="1" height="5"/>
</g>

<!-- status bar icons -->
<rect x="1345.2" y="879" width="3.2" height="10" fill="#5aa070"/>
<path d="M1341,884.6 L1346.8,890.6 L1352.6,884.6" fill="none" stroke="#5aa070" stroke-width="3.2"/>
<rect x="1340" y="893" width="13.4" height="2" fill="#5aa070"/>
<rect x="1424.8" y="881.7" width="14.5" height="10.5" fill="#fff" stroke="#6b778a" stroke-width="1"/>
<rect x="1436" y="882.5" width="2.4" height="3" fill="#0078d4"/>
<path d="M1427.5,887.6 H1436 M1427.5,889.6 H1436" stroke="#5f6b7e" stroke-width="1"/>
</svg>

<!-- /ICONS -->
</body></html>
